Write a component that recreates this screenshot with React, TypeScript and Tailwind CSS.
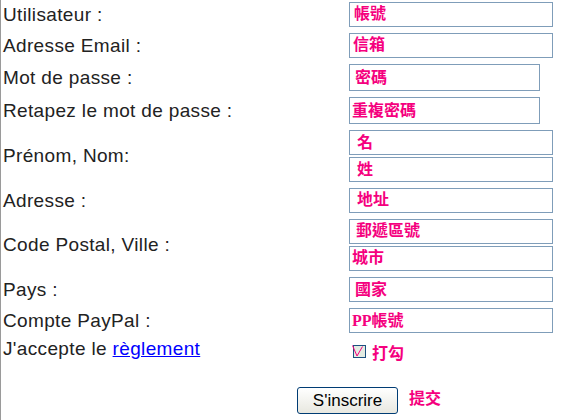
import React from 'react';

const label = "w-[348px] pl-[2px] text-[19px] leading-[22px] tracking-[0.35px] text-[#222] font-['Liberation_Sans',Arial,sans-serif]";
const pink = "font-bold text-[16px] leading-[18px] text-[#f5007e] font-['Liberation_Serif','Noto_Sans_CJK_TC',serif]";

interface BoxProps {
  text: string;
  indent: string;
  password?: boolean;
}

const Box: React.FC<BoxProps> = ({ text, indent, password }) => (
  <div
    className={
      password
        ? 'flex items-center h-[27px] w-[191px] border border-[#7f9db9] bg-white'
        : 'flex items-center h-[25px] w-[204px] border border-[#7f9db9] bg-white'
    }
  >
    <span className={`${pink} ${indent}`}>{text}</span>
  </div>
);

const Row: React.FC<{ name: string; children: React.ReactNode }> = ({ name, children }) => (
  <div className="flex items-center">
    <div className={label}>{name}</div>
    <div className="flex flex-col gap-[2px]">{children}</div>
  </div>
);

export default function App() {
  return (
    <div className="w-[565px] h-[420px] bg-white border-l border-[#9a9a9a] overflow-hidden">
      <div className="flex flex-col gap-[6px] pt-[2px]">
        <Row name="Utilisateur :">
          <Box text="帳號" indent="pl-[4px] pb-[2px]" />
        </Row>
        <Row name="Adresse Email :">
          <Box text="信箱" indent="pl-[3px] pb-[1px]" />
        </Row>
        <Row name="Mot de passe :">
          <Box text="密碼" indent="pl-[5px]" password />
        </Row>
        <Row name="Retapez le mot de passe :">
          <Box text="重複密碼" indent="pl-[2px]" password />
        </Row>
        <Row name="Prénom, Nom:">
          <Box text="名" indent="pl-[7px]" />
          <Box text="姓" indent="pl-[7px]" />
        </Row>
        <Row name="Adresse :">
          <Box text="地址" indent="pl-[7px] pb-[2px]" />
        </Row>
        <Row name="Code Postal, Ville :">
          <Box text="郵遞區號" indent="pl-[6px] pb-[2px]" />
          <Box text="城市" indent="pl-[2px] pb-[2px]" />
        </Row>
        <Row name="Pays :">
          <Box text="國家" indent="pl-[5px]" />
        </Row>
        <Row name="Compte PayPal :">
          <Box text="PP帳號" indent="pl-[2px]" />
        </Row>
        <div className="flex items-center h-[25px]">
          <div className={`${label} pb-[5px]`}>
            J'accepte le{' '}
            <a href="#" className="text-[#0000ff] underline">
              règlement
            </a>
          </div>
          <div className="flex items-center">
            <svg width="15" height="15" viewBox="0 0 15 15" className="ml-[3px]">
              <rect x="1.5" y="1.5" width="12" height="12" fill="#e4ece2" stroke="#1c5180" />
              <polyline points="0.5,1.5 5,12 10.5,2.5" fill="none" stroke="#f5007e" strokeWidth="1" />
            </svg>
            <span className={`${pink} ml-[5px] pt-[4px]`}>打勾</span>
          </div>
        </div>
        <div className="flex items-center mt-[17px] ml-[296px]">
          <button className="h-[27px] w-[101px] rounded-[3px] border border-[#003c74] bg-gradient-to-b from-white to-[#e8e8e0] text-[17px] text-black font-['Liberation_Sans',Arial,sans-serif]">
            S'inscrire
          </button>
          <span className={`${pink} ml-[11px] pb-[3px]`}>提交</span>
        </div>
      </div>
    </div>
  );
}
